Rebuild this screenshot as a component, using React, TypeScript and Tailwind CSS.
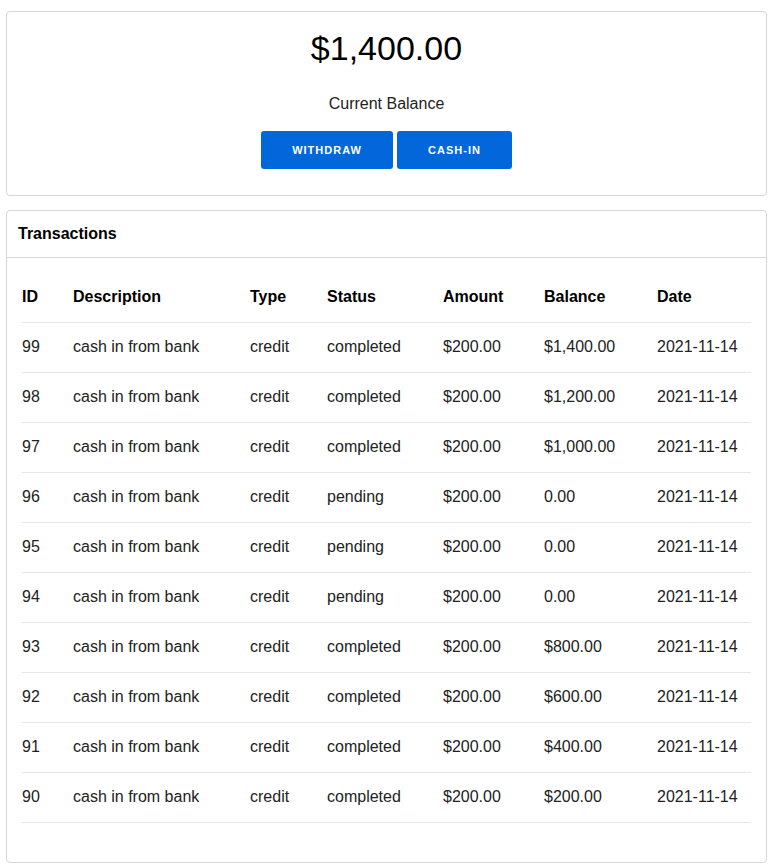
import React from 'react';

type Tx = {
  id: number;
  description: string;
  type: string;
  status: string;
  amount: string;
  balance: string;
  date: string;
};

const transactions: Tx[] = [
  { id: 99, description: 'cash in from bank', type: 'credit', status: 'completed', amount: '$200.00', balance: '$1,400.00', date: '2021-11-14' },
  { id: 98, description: 'cash in from bank', type: 'credit', status: 'completed', amount: '$200.00', balance: '$1,200.00', date: '2021-11-14' },
  { id: 97, description: 'cash in from bank', type: 'credit', status: 'completed', amount: '$200.00', balance: '$1,000.00', date: '2021-11-14' },
  { id: 96, description: 'cash in from bank', type: 'credit', status: 'pending', amount: '$200.00', balance: '0.00', date: '2021-11-14' },
  { id: 95, description: 'cash in from bank', type: 'credit', status: 'pending', amount: '$200.00', balance: '0.00', date: '2021-11-14' },
  { id: 94, description: 'cash in from bank', type: 'credit', status: 'pending', amount: '$200.00', balance: '0.00', date: '2021-11-14' },
  { id: 93, description: 'cash in from bank', type: 'credit', status: 'completed', amount: '$200.00', balance: '$800.00', date: '2021-11-14' },
  { id: 92, description: 'cash in from bank', type: 'credit', status: 'completed', amount: '$200.00', balance: '$600.00', date: '2021-11-14' },
  { id: 91, description: 'cash in from bank', type: 'credit', status: 'completed', amount: '$200.00', balance: '$400.00', date: '2021-11-14' },
  { id: 90, description: 'cash in from bank', type: 'credit', status: 'completed', amount: '$200.00', balance: '$200.00', date: '2021-11-14' },
];

export default function App() {
  return (
    <div className="min-h-screen bg-white px-[6px] pt-[11px] pb-[4px] font-['Liberation_Sans',Arial,sans-serif] text-[#222]">
      {/* Balance card */}
      <div className="rounded-[4px] border border-[#d6d6d6] pt-[16px] pb-[26px] text-center">
        <div className="text-[34px] leading-[40px] text-black">$1,400.00</div>
        <div className="mt-[24px] text-[16px] leading-[24px] text-[#222]">Current Balance</div>
        <div className="mt-[15px] flex justify-center gap-[4px]">
          <button className="h-[38px] w-[132px] rounded-[3px] bg-[#0167db] text-[11px] font-bold tracking-[1px] text-white">
            WITHDRAW
          </button>
          <button className="h-[38px] w-[115px] rounded-[3px] bg-[#0167db] text-[11px] font-bold tracking-[1px] text-white">
            CASH-IN
          </button>
        </div>
      </div>

      {/* Transactions card */}
      <div className="mt-[14px] rounded-[4px] border border-[#d6d6d6]">
        <div className="flex h-[47px] items-center border-b border-[#d6d6d6] px-[11px] text-[16px] font-bold text-black">
          Transactions
        </div>
        <div className="px-[15px] pt-[14px] pb-[39px]">
          <table className="w-full table-fixed border-collapse text-left text-[16px]">
            <colgroup>
              <col className="w-[51px]" />
              <col className="w-[177px]" />
              <col className="w-[77px]" />
              <col className="w-[116px]" />
              <col className="w-[101px]" />
              <col className="w-[113px]" />
              <col />
            </colgroup>
            <thead>
              <tr className="h-[50px] border-b border-[#e6e6e6] text-black">
                <th className="font-bold">ID</th>
                <th className="font-bold">Description</th>
                <th className="font-bold">Type</th>
                <th className="font-bold">Status</th>
                <th className="font-bold">Amount</th>
                <th className="font-bold">Balance</th>
                <th className="font-bold">Date</th>
              </tr>
            </thead>
            <tbody>
              {transactions.map((tx) => (
                <tr key={tx.id} className="h-[50px] border-b border-[#e6e6e6]">
                  <td>{tx.id}</td>
                  <td>{tx.description}</td>
                  <td>{tx.type}</td>
                  <td>{tx.status}</td>
                  <td>{tx.amount}</td>
                  <td>{tx.balance}</td>
                  <td>{tx.date}</td>
                </tr>
              ))}
            </tbody>
          </table>
        </div>
      </div>
    </div>
  );
}
